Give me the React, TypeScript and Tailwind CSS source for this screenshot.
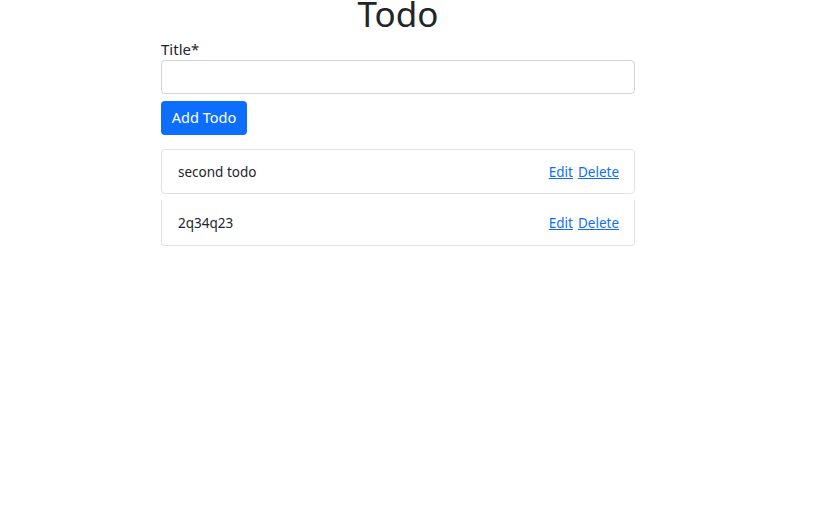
const todos = [
    { id: 1, title: 'second todo', h: 'h-[45px] border-t rounded', mt: 'mt-[14px]' },
    { id: 2, title: '2q34q23', h: 'h-[46px] border-t-0 rounded-b', mt: 'mt-[6px]' },
];

export default function App() {
    return (
        <div className="min-h-[505px] bg-white text-[#212529] font-['Noto_Sans',sans-serif]">
            <div className="ml-[161px] w-[474px]">
                <h1 className="h-[28px] text-center text-[35px] leading-[28px]">Todo</h1>

                <label className="mt-[10px] block text-[15px] leading-[22px]">Title*</label>
                <input
                    type="text"
                    className="block h-[34px] w-full rounded border border-[#ced4da] px-3 outline-none"
                />
                <button className="mt-[7px] h-[34px] w-[86px] rounded bg-[#0d6efd] text-[14.5px] text-white">
                    Add Todo
                </button>

                {todos.map((todo) => (
                    <div
                        key={todo.id}
                        className={`${todo.mt} ${todo.h} flex items-center justify-between border-x border-b border-[#dee2e6] pl-[16px] pr-[15px] pt-[2px] text-[13.5px]`}
                    >
                        <span>{todo.title}</span>
                        <div className="flex gap-[5px]">
                            <a href="#" className="text-[#0d6efd] underline">Edit</a>
                            <a href="#" className="text-[#0d6efd] underline">Delete</a>
                        </div>
                    </div>
                ))}
            </div>
        </div>
    );
}
